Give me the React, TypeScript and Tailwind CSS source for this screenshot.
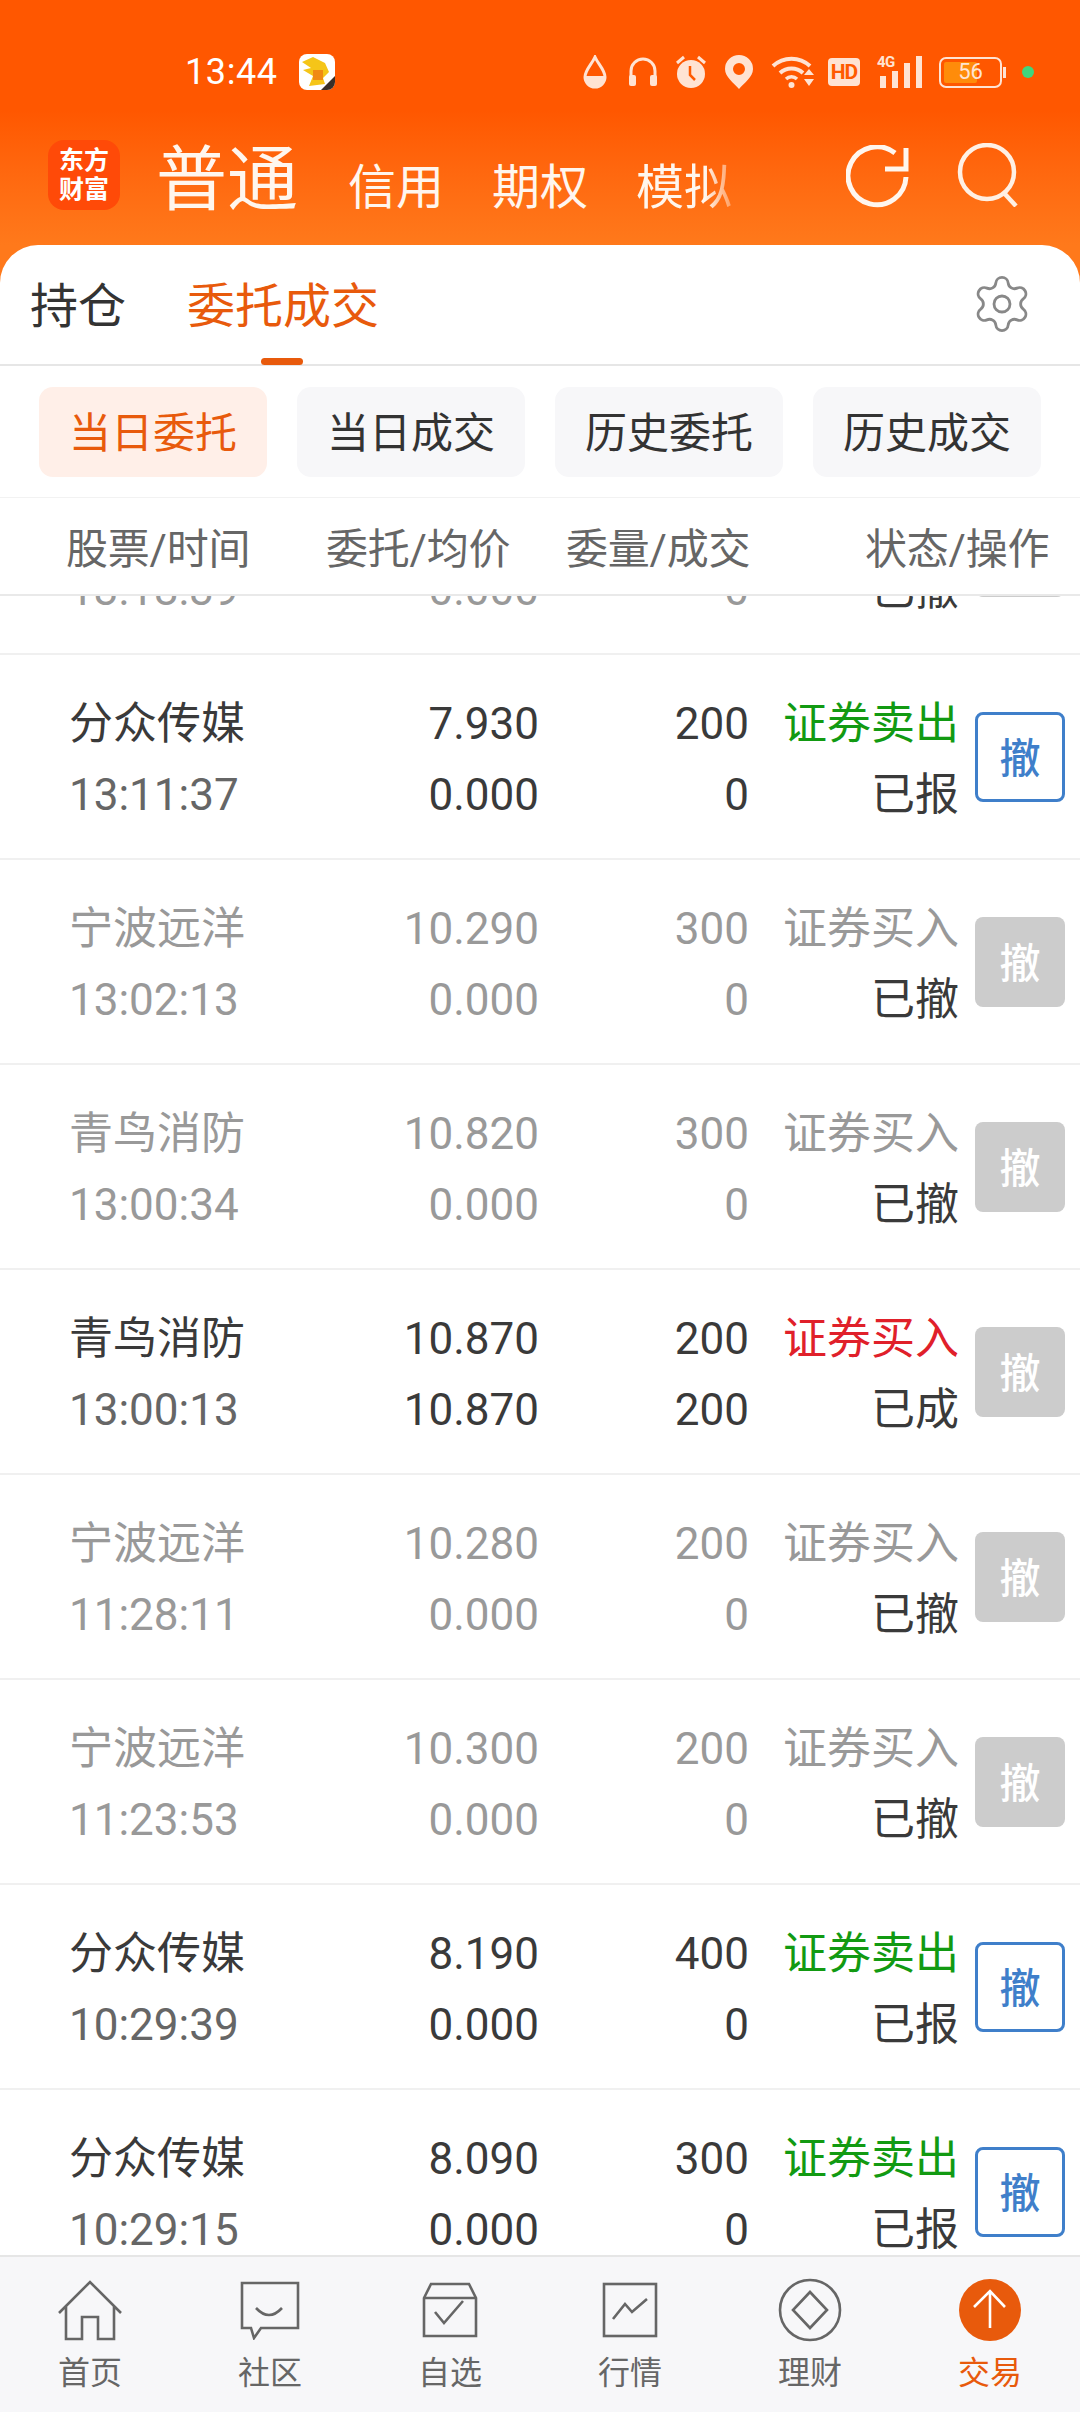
import { Settings } from "lucide-react";

const FONT = "font-['Roboto','Noto_Sans_CJK_SC',sans-serif]";

type Order = {
  name: string;
  time: string;
  price: string;
  avg: string;
  qty: string;
  done: string;
  side: string;
  status: string;
  tone: "sell" | "buy" | "dim";
};

const orders: Order[] = [
  { name: "宁波远洋", time: "13:18:39", price: "10.300", avg: "0.000", qty: "200", done: "0", side: "证券买入", status: "已撤", tone: "dim" },
  { name: "分众传媒", time: "13:11:37", price: "7.930", avg: "0.000", qty: "200", done: "0", side: "证券卖出", status: "已报", tone: "sell" },
  { name: "宁波远洋", time: "13:02:13", price: "10.290", avg: "0.000", qty: "300", done: "0", side: "证券买入", status: "已撤", tone: "dim" },
  { name: "青鸟消防", time: "13:00:34", price: "10.820", avg: "0.000", qty: "300", done: "0", side: "证券买入", status: "已撤", tone: "dim" },
  { name: "青鸟消防", time: "13:00:13", price: "10.870", avg: "10.870", qty: "200", done: "200", side: "证券买入", status: "已成", tone: "buy" },
  { name: "宁波远洋", time: "11:28:11", price: "10.280", avg: "0.000", qty: "200", done: "0", side: "证券买入", status: "已撤", tone: "dim" },
  { name: "宁波远洋", time: "11:23:53", price: "10.300", avg: "0.000", qty: "200", done: "0", side: "证券买入", status: "已撤", tone: "dim" },
  { name: "分众传媒", time: "10:29:39", price: "8.190", avg: "0.000", qty: "400", done: "0", side: "证券卖出", status: "已报", tone: "sell" },
  { name: "分众传媒", time: "10:29:15", price: "8.090", avg: "0.000", qty: "300", done: "0", side: "证券卖出", status: "已报", tone: "sell" },
];

function StatusIcons() {
  const c = "#ffe3d3";
  return (
    <div className="ml-auto flex items-center pr-[46px]">
      <svg width="24" height="34" viewBox="0 0 24 34" fill="none">
        <path d="M12 2 C9 9 2 15 2 22 a10 10 0 0 0 20 0 C22 15 15 9 12 2Z" stroke={c} strokeWidth="3" />
        <path d="M2 21 H22 a10 11 0 0 1 -20 0Z" fill={c} />
      </svg>
      <svg className="ml-[21px]" width="30" height="30" viewBox="0 0 30 30" fill="none">
        <path d="M3 22 V14 a12 12 0 0 1 24 0 V22" stroke={c} strokeWidth="3" />
        <rect x="1" y="18" width="7" height="11" rx="2" fill={c} />
        <rect x="22" y="18" width="7" height="11" rx="2" fill={c} />
      </svg>
      <svg className="ml-[17px]" width="32" height="34" viewBox="0 0 32 34" fill="none">
        <circle cx="16" cy="19" r="14" fill={c} />
        <path d="M15 11 V20 L20 25" stroke="#ff5a00" strokeWidth="2.5" />
        <path d="M2 8 L9 2 M30 8 L23 2" stroke={c} strokeWidth="3" />
      </svg>
      <svg className="ml-[18px]" width="28" height="34" viewBox="0 0 28 34">
        <path fillRule="evenodd" fill={c} d="M14 0 a14 14 0 0 1 14 14 C28 22 19 28 14 34 C9 28 0 22 0 14 A14 14 0 0 1 14 0Z M14 8 a6 6 0 1 0 0 12 a6 6 0 0 0 0 -12Z" />
      </svg>
      <svg className="ml-[18px]" width="44" height="34" viewBox="0 0 44 34" fill="none">
        <path d="M2 11 a27 27 0 0 1 37 0" stroke={c} strokeWidth="4" />
        <path d="M9 18 a17 17 0 0 1 23 0" stroke={c} strokeWidth="4" />
        <path d="M15 24 a8 8 0 0 1 11 0" stroke={c} strokeWidth="3.5" />
        <circle cx="20.500" cy="30" r="3" fill={c} />
        <path d="M33 20 L38 14 L43 20Z M33 24 H43 L38 31Z" fill={c} />
      </svg>
      <div className="ml-[13px] flex h-[28px] w-[32px] items-center justify-center rounded-[4px] bg-[#ffe3d3] text-[21px] leading-none font-bold tracking-[-1px] text-[#ff5a00]">
        HD
      </div>
      <div className="relative ml-[17px] h-[34px] w-[46px]">
        <span className="absolute top-[-2px] left-0 text-[15px] leading-[18px] font-bold tracking-[-0.5px] text-[#ffe3d3]">4G</span>
        <svg className="absolute top-0 left-0" width="46" height="34" viewBox="0 0 46 34" fill={c}>
          <rect x="3" y="21" width="6" height="12" />
          <rect x="15" y="16" width="6" height="17" />
          <rect x="27" y="8" width="6" height="25" />
          <rect x="39" y="1" width="6" height="32" />
        </svg>
      </div>
      <div className="ml-[16px] flex items-center">
        <div className="relative h-[31px] w-[63px] rounded-[7px] border-[2px] border-[#ffe3d3] p-[3px]">
          <div className="h-full w-[33px] rounded-[2px] bg-[#ff8c0a]" />
          <span className="absolute inset-0 flex items-center justify-center text-[22px] leading-none text-[#ffe3d3]">56</span>
        </div>
        <div className="ml-[1px] h-[11px] w-[3px] bg-[#ffe3d3]" />
      </div>
      <div className="ml-[16px] h-[12px] w-[12px] rounded-full bg-[#3fd67d]" />
    </div>
  );
}

function AppIcon() {
  return (
    <svg className="ml-[21px]" width="36" height="36" viewBox="0 0 36 36">
      <rect width="36" height="36" rx="8" fill="#fff" />
      <path d="M3 8 L14 3 L26 9 L30 18 L24 24 L26 30 L10 32 L14 22 L4 16 L12 14Z" fill="#f5c518" />
      <rect x="14" y="16" width="10" height="10" fill="#f08a14" />
      <path d="M36 22 V28 a8 8 0 0 1 -8 8 H22Z" fill="#3a3028" />
    </svg>
  );
}

function Header() {
  return (
    <div className="h-[245px] bg-gradient-to-b from-[#ff5700] from-45% to-[#ff791b] pt-[52px] text-[#fff6ee]">
      <div className="flex h-[40px] items-center pl-[185px]">
        <span className="text-[36px] leading-none tracking-[0.6px] text-[#fff]">13:44</span>
        <AppIcon />
        <StatusIcons />
      </div>
      <div className="mt-[33px] flex h-[100px] items-center pl-[48px]">
        <div className="flex h-[70px] w-[72px] flex-col items-center justify-center rounded-[16px] bg-[#ff4a08] text-[25px] leading-[29px] font-bold text-[#fff]">
          <span>东方</span>
          <span>财富</span>
        </div>
        <div className="flex items-baseline pt-[10px] pl-[36px]">
          <span className="text-[71px] leading-[90px]">普通</span>
          <span className="ml-[50px] text-[48px]">信用</span>
          <span className="ml-[48px] text-[48px]">期权</span>
          <span className="ml-[48px] text-[48px] [mask-image:linear-gradient(to_right,#000_72%,#00000059_100%)]">模拟</span>
        </div>
        <svg className="mt-[4px] ml-[114px]" width="66" height="64" viewBox="0 0 66 64" fill="none" stroke="#fff6ee" strokeWidth="5">
          <path d="M60 32 A29 29 0 1 1 49 8" />
          <path d="M60 3 V24 H39" />
        </svg>
        <svg className="ml-[45px]" width="66" height="64" viewBox="0 0 66 64" fill="none" stroke="#fff0e4" strokeWidth="4.500">
          <circle cx="30" cy="29" r="27" />
          <path d="M47 50 L59 63" />
        </svg>
      </div>
    </div>
  );
}

function Tabs() {
  return (
    <div className="bg-[#ff791b]">
      <div className="flex h-[121px] items-center rounded-t-[38px] border-b-2 border-[#e6e6e6] bg-white pt-[4px] pl-[30px] text-[48px] leading-none">
        <span className="text-[#333]">持仓</span>
        <span className="relative ml-[61px] text-[#e85a0c]">
          委托成交
          <span className="absolute top-[75px] left-[74px] h-[7px] w-[42px] rounded-full bg-[#e85a0c]" />
        </span>
        <Settings className="mr-[46px] mb-[6px] ml-auto" size={64} color="#888" strokeWidth={1.05} />
      </div>
    </div>
  );
}

const chips = ["当日委托", "当日成交", "历史委托", "历史成交"];

function Chips() {
  return (
    <div className="flex gap-[30px] border-b border-[#f2f2f2] px-[39px] pt-[21px] pb-[20px]">
      {chips.map((c, i) => (
        <div
          key={c}
          className={
            i === 0
              ? "flex h-[90px] w-[228px] items-center justify-center rounded-[14px] bg-[#ffefe8] pt-[3px] text-[42px] text-[#e85a0c]"
              : "flex h-[90px] w-[228px] items-center justify-center rounded-[14px] bg-[#f7f7f9] pt-[3px] text-[42px] text-[#333]"
          }
        >
          {c}
        </div>
      ))}
    </div>
  );
}

function ColumnHead() {
  return (
    <div className="flex h-[98px] items-center border-b-2 border-[#e9e9e9] bg-white pt-[6px] pl-[66px] text-[42px] tracking-[-0.2px] whitespace-nowrap text-[#666]">
      <span className="w-[260px]">股票/时间</span>
      <span className="w-[240px]">委托/均价</span>
      <span className="w-[299px]">委量/成交</span>
      <span>状态/操作</span>
    </div>
  );
}

function Row({ o }: { o: Order }) {
  const dim = o.tone === "dim";
  const main = dim ? "text-[#999]" : "text-[#3a3a3a]";
  const sub = dim ? "text-[#999]" : "text-[#666]";
  const side = dim ? "text-[#999]" : o.tone === "sell" ? "text-[#129a12]" : "text-[#e0202a]";
  return (
    <div className="flex h-[205px] shrink-0 items-center border-b-2 border-[#f0f0f0] pl-[69px] text-[44px] leading-[71px] whitespace-nowrap">
      <div className="w-[271px] pt-[6px]">
        <div className={main}>{o.name}</div>
        <div className={sub}>{o.time}</div>
      </div>
      <div className={"w-[199px] pt-[6px] text-right " + main}>
        <div>{o.price}</div>
        <div>{o.avg}</div>
      </div>
      <div className={"w-[210px] pt-[6px] text-right " + main}>
        <div>{o.qty}</div>
        <div>{o.done}</div>
      </div>
      <div className="w-[210px] pt-[6px] text-right">
        <div className={side}>{o.side}</div>
        <div className="text-[#3a3a3a]">{o.status}</div>
      </div>
      {o.tone === "sell" ? (
        <div className="ml-[16px] flex h-[90px] w-[90px] items-center justify-center rounded-[8px] border-[3px] border-[#3f7fca] pt-[5px] text-[41px] font-medium text-[#3f7fca]">
          撤
        </div>
      ) : (
        <div className="ml-[16px] flex h-[90px] w-[90px] items-center justify-center rounded-[8px] bg-[#ccc] pt-[5px] text-[41px] font-medium text-white">
          撤
        </div>
      )}
    </div>
  );
}

const navStroke = { fill: "none", stroke: "#666", strokeWidth: 2.6 };

function NavIcon({ name }: { name: string }) {
  if (name === "首页")
    return (
      <svg width="66" height="62" viewBox="0 0 66 62" {...navStroke}>
        <path d="M2 34 L33 3 L64 34 M9 27 V60 H25 V38 H41 V60 H57 V27" />
      </svg>
    );
  if (name === "社区")
    return (
      <svg width="60" height="60" viewBox="0 0 60 60" {...navStroke}>
        <path d="M2 3 H58 V48 H21 L14 58 L11 48 H2 Z" />
        <path d="M16 28 Q29 42 42 28" />
      </svg>
    );
  if (name === "自选")
    return (
      <svg width="56" height="56" viewBox="0 0 56 56" {...navStroke}>
        <path d="M2 16 L9 2 H47 L54 16 V54 H2 Z M2 16 H54" />
        <path d="M13 30 L22 41 L41 19" />
      </svg>
    );
  if (name === "行情")
    return (
      <svg width="56" height="56" viewBox="0 0 56 56" {...navStroke}>
        <rect x="2" y="2" width="52" height="52" />
        <path d="M11 37 L23 22 L30 30 L45 17" />
      </svg>
    );
  if (name === "理财")
    return (
      <svg width="64" height="64" viewBox="0 0 64 64" {...navStroke}>
        <circle cx="32" cy="32" r="30" />
        <path d="M32 14 L49 32 L32 50 L15 32Z" />
      </svg>
    );
  return (
    <svg width="64" height="64" viewBox="0 0 64 64" fill="none">
      <circle cx="32" cy="32" r="31" fill="#e85a0c" />
      <path d="M16 29 L32 13 L47 29 M32 13 V50" stroke="#fff" strokeWidth="2.600" />
    </svg>
  );
}

const navItems = ["首页", "社区", "自选", "行情", "理财", "交易"];

function BottomNav() {
  return (
    <div className="grid h-[157px] shrink-0 grid-cols-6 border-t-2 border-[#e6e6e6] bg-[#f7f7f9]">
      {navItems.map((n) => (
        <div key={n} className="flex flex-col items-center">
          <div className="mt-[21px] flex h-[64px] items-center">
            <NavIcon name={n} />
          </div>
          <span className={n === "交易" ? "mt-[11px] text-[32px] leading-[40px] text-[#e85a0c]" : "mt-[11px] text-[32px] leading-[40px] text-[#666]"}>
            {n}
          </span>
        </div>
      ))}
    </div>
  );
}

export default function App() {
  return (
    <div className={"flex h-[2412px] w-[1080px] flex-col overflow-hidden bg-white " + FONT}>
      <Header />
      <Tabs />
      <Chips />
      <ColumnHead />
      <div className="min-h-0 flex-1 overflow-hidden">
        <div className="mt-[-146px] flex flex-col">
          {orders.map((o) => (
            <Row key={o.time} o={o} />
          ))}
        </div>
      </div>
      <BottomNav />
    </div>
  );
}
